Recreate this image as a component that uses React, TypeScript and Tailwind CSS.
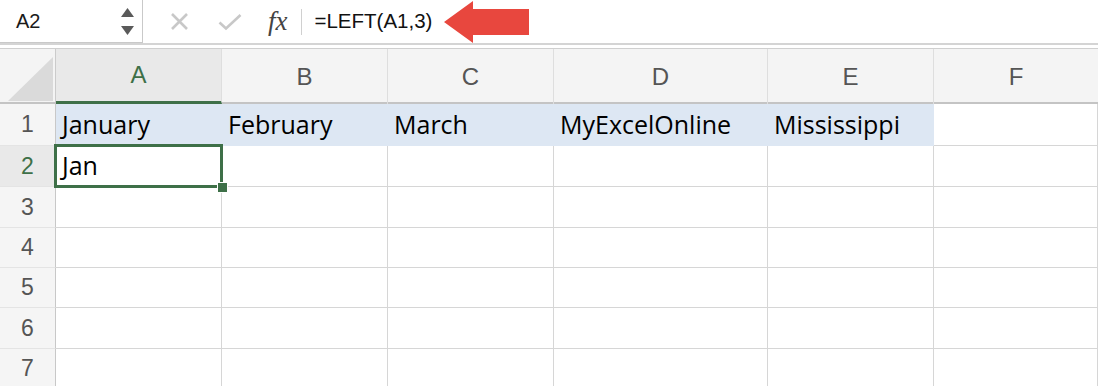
import React from "react";

const cols = [
  { key: "A", w: "w-[166px]" },
  { key: "B", w: "w-[166px]" },
  { key: "C", w: "w-[166px]" },
  { key: "D", w: "w-[214px]" },
  { key: "E", w: "w-[166px]" },
  { key: "F", w: "flex-1" },
];

const rows: { n: number; h: string; cells: string[] }[] = [
  { n: 1, h: "h-[42px]", cells: ["January", "February", "March", "MyExcelOnline", "Mississippi", ""] },
  { n: 2, h: "h-[41px]", cells: ["Jan", "", "", "", "", ""] },
  { n: 3, h: "h-[41px]", cells: ["", "", "", "", "", ""] },
  { n: 4, h: "h-[40px]", cells: ["", "", "", "", "", ""] },
  { n: 5, h: "h-[40px]", cells: ["", "", "", "", "", ""] },
  { n: 6, h: "h-[41px]", cells: ["", "", "", "", "", ""] },
  { n: 7, h: "h-[40px]", cells: ["", "", "", "", "", ""] },
];

const cellFont = { fontFamily: "'Open Sans', Lato, sans-serif" };
const uiFont = { fontFamily: "'Liberation Sans', Arial, sans-serif" };

function FormulaBar() {
  return (
    <div className="flex h-[45px] items-stretch border-b-2 border-[#d4d4d4] bg-white" style={uiFont}>
      <div className="flex w-[143px] items-center justify-between border-r border-b border-[#c9c9c9] pl-4 pr-2 h-[43px]">
        <span className="text-[20px] text-[#1a1a1a]">A2</span>
        <div className="flex flex-col items-center gap-[9px]">
          <svg width="13" height="9" viewBox="0 0 13 9"><path d="M6.5 0L13 9H0z" fill="#5a5a5a" /></svg>
          <svg width="13" height="9" viewBox="0 0 13 9"><path d="M0 0h13L6.5 9z" fill="#5a5a5a" /></svg>
        </div>
      </div>
      <div className="flex items-center pl-[27px]">
        <svg width="19" height="19" viewBox="0 0 19 19">
          <path d="M2 2L17 17M17 2L2 17" stroke="#c8c8c8" strokeWidth="2.6" />
        </svg>
        <svg className="ml-[29px]" width="24" height="18" viewBox="0 0 24 18">
          <path d="M1.5 9.5L8 15.5L22.5 2" stroke="#c8c8c8" strokeWidth="2.6" fill="none" />
        </svg>
        <span
          className="ml-[26px] text-[27px] italic leading-none text-[#444]"
          style={{ fontFamily: "'Liberation Serif', 'Times New Roman', serif" }}
        >
          fx
        </span>
        <div className="ml-[13px] h-[26px] w-px bg-[#d0d0d0]" />
        <span className="ml-[13px] text-[20.5px] text-[#111]">=LEFT(A1,3)</span>
        <svg className="ml-[12px]" width="86" height="42" viewBox="0 0 86 42">
          <path d="M0 21L29 0V8H85V34H29V42Z" fill="#e8473e" />
        </svg>
      </div>
    </div>
  );
}

function HeaderRow() {
  return (
    <div className="flex h-[56px] border-t border-[#cfcfcf] border-b-2 border-b-[#c4c4c4] bg-[#f4f4f4]" style={uiFont}>
      <div className="relative w-[56px] shrink-0 border-r border-[#cbcbcb]">
        <svg className="absolute left-[8px] top-[8px]" width="45" height="44" viewBox="0 0 45 44">
          <path d="M0 44L45 0V44Z" fill="#dadada" />
        </svg>
      </div>
      {cols.map((c) => (
        <div
          key={c.key}
          className={`${c.w} ${c.key === "A" ? "bg-[#e9e9e9] border-b-[3px] border-b-[#3e7048] text-[#3e7048]" : "text-[#555]"} ${c.key !== "F" ? "border-r border-[#dedede]" : ""} flex items-center justify-center text-[24px] -mb-[2px]`}
        >
          {c.key}
        </div>
      ))}
    </div>
  );
}

function Grid() {
  return (
    <div>
      {rows.map((r) => (
        <div key={r.n} className={`flex ${r.h}`}>
          <div
            className={`w-[56px] shrink-0 flex items-center justify-center border-r border-[#c8c8c8] border-b border-b-[#e4e4e4] text-[23px] ${r.n === 2 ? "bg-[#e9e9e9] text-[#3e7048]" : "bg-[#f5f5f5] text-[#555]"}`}
            style={uiFont}
          >
            {r.n}
          </div>
          {cols.map((c, i) => {
            const filled = r.n === 1 && c.key !== "F";
            const selected = r.n === 2 && c.key === "A";
            return (
              <div
                key={c.key}
                className={`${c.w} relative flex items-center px-[6px] text-[25px] text-black ${filled ? "bg-[#dde7f3]" : "border-b border-r border-[#d6d6d6]"}`}
                style={cellFont}
              >
                {selected && (
                  <>
                    <div className="absolute z-10 -left-[2px] -top-[2px] right-[-2px] bottom-[-2px] border-[3px] border-[#3e7048]" />
                    <div className="absolute z-20 right-[-7px] bottom-[-7px] h-[11px] w-[11px] border-[1.5px] border-white bg-[#3e7048]" />
                  </>
                )}
                <span className="relative">{r.cells[i]}</span>
              </div>
            );
          })}
        </div>
      ))}
    </div>
  );
}

export default function App() {
  return (
    <div className="h-[386px] w-[1098px] overflow-hidden bg-white">
      <FormulaBar />
      <div className="h-[3px] bg-white" />
      <HeaderRow />
      <Grid />
    </div>
  );
}
